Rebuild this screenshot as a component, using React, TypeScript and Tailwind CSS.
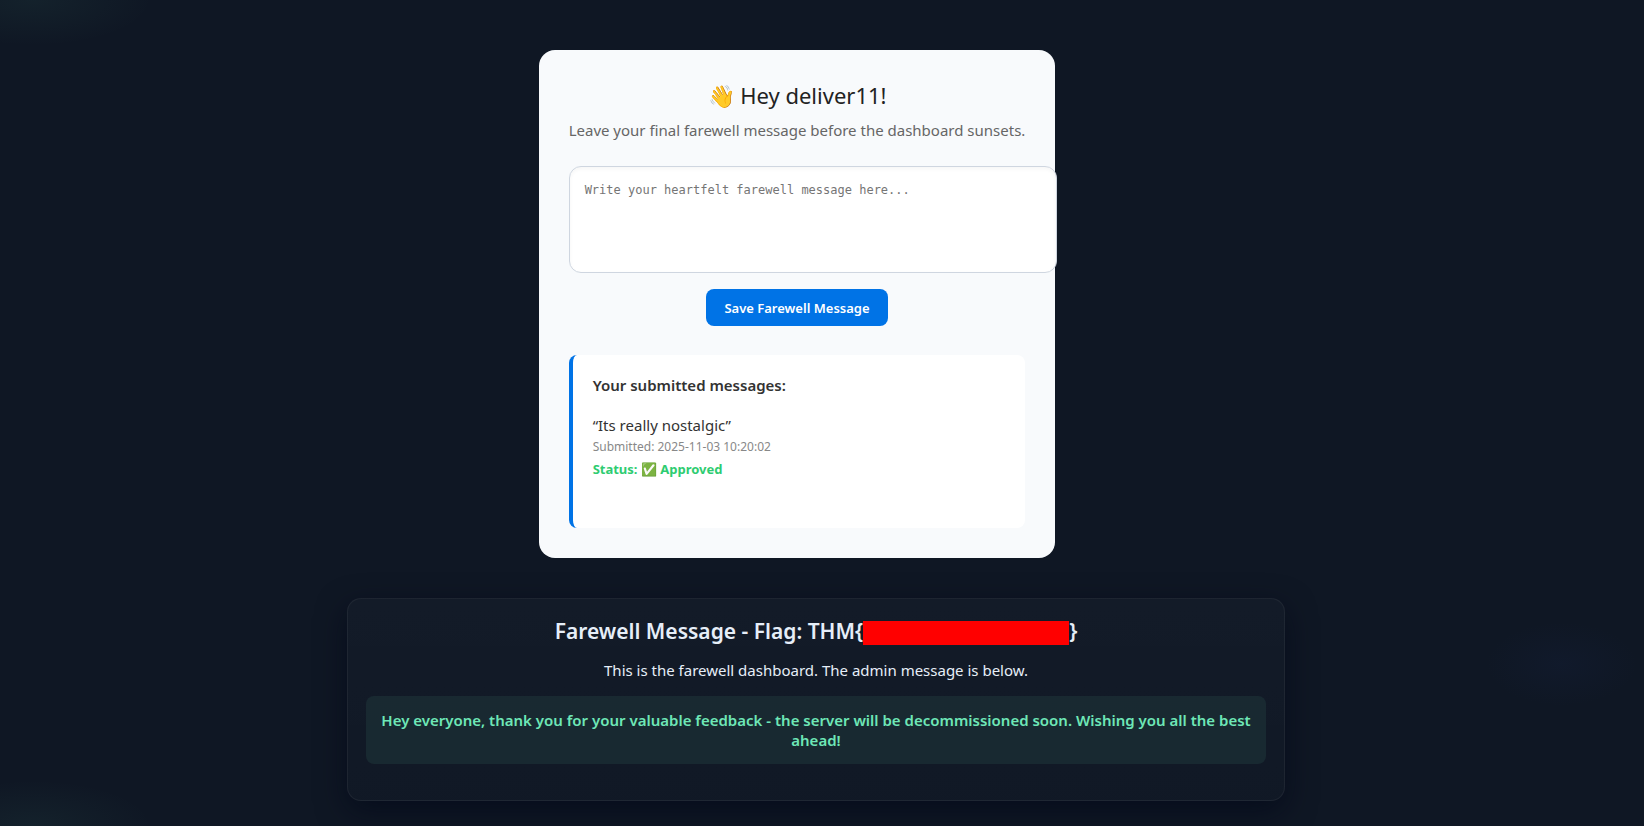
import React from 'react'

interface Message {
  text: string
  submittedAt: string
  status: string
}

const messages: Message[] = [
  { text: 'Its really nostalgic', submittedAt: '2025-11-03 10:20:02', status: '✅ Approved' },
]

function MessageForm() {
  return (
    <form className="mt-6 flex flex-col items-center">
      <textarea
        aria-label="Farewell message"
        placeholder="Write your heartfelt farewell message here..."
        className="box-content h-[75px] w-full resize-none self-start rounded-xl border border-[#cfd6e0] bg-white p-[15px] font-['DejaVu_Sans_Mono',monospace] text-xs leading-4 text-[#333] shadow-[inset_0_2px_4px_rgba(0,0,0,0.04)] placeholder:text-[#757575]"
      />
      <button
        type="button"
        className="mt-4 rounded-lg bg-[#0073e6] px-[18px] pt-2.5 pb-2 text-[13px] leading-[19px] font-semibold text-white"
      >
        Save Farewell Message
      </button>
    </form>
  )
}

function SubmittedMessages() {
  return (
    <section className="mt-[29px] rounded-lg border-l-4 border-[#0073e6] bg-white px-5 pt-5 pb-12 text-[#333]">
      <h3 className="text-[15px] leading-5 font-semibold">Your submitted messages:</h3>
      {messages.map((m) => (
        <div key={m.submittedAt} className="mt-5">
          <p className="text-[15px] leading-5">“{m.text}”</p>
          <p className="pt-0.5 text-xs leading-5 text-[#888]">Submitted: {m.submittedAt}</p>
          <p className="pt-0.5 pb-px text-[13px] leading-5 font-bold text-[#2ecc71]">Status: {m.status}</p>
        </div>
      ))}
    </section>
  )
}

function FlagPanel() {
  return (
    <section className="mt-10 w-full rounded-[14px] border border-white/5 bg-linear-to-b from-white/[0.02] to-white/[0.01] px-[18px] pt-[18px] pb-9 text-center text-[#e6eef8] shadow-[0_10px_30px_rgba(2,6,23,0.6)]">
      <h2 className="flex items-end justify-center text-[21px] leading-7 font-semibold">
        Farewell Message - Flag: THM{'{'}
        <span className="h-6 w-[206px] bg-[#ff0000]" />
        {'}'}
      </h2>
      <p className="mt-[15px] text-[15px] leading-5">This is the farewell dashboard. The admin message is below.</p>
      <div className="mt-4 rounded-lg bg-[#6ee7b7]/8 px-3 py-[14px] text-[15px] leading-5 font-semibold text-[#6ee7b7]">
        Hey everyone, thank you for your valuable feedback - the server will be decommissioned soon. Wishing you all the
        best ahead!
      </div>
    </section>
  )
}

export default function App() {
  return (
    <div className="min-h-screen bg-[#0f1724] bg-[radial-gradient(ellipse_120px_46px_at_2%_0%,rgba(110,231,183,0.05),transparent),radial-gradient(ellipse_120px_46px_at_2%_100%,rgba(110,231,183,0.05),transparent),radial-gradient(ellipse_76px_42px_at_95%_664px,rgba(40,60,140,0.07),transparent)] pt-[50px] pr-3 pb-[25px] font-['Noto_Sans',sans-serif]">
      <main className="mx-auto max-w-[938px]">
        <div className="flex max-w-[900px] justify-center">
          <section className="rounded-2xl bg-[#f8fafc] p-[30px]">
            <h1 className="text-center text-[22px] leading-[30px] text-[#222]">👋 Hey deliver11!</h1>
            <p className="mt-2 text-center text-[15px] leading-6 text-[#666]">
              Leave your final farewell message before the dashboard sunsets.
            </p>
            <MessageForm />
            <SubmittedMessages />
          </section>
        </div>
        <FlagPanel />
      </main>
    </div>
  )
}
